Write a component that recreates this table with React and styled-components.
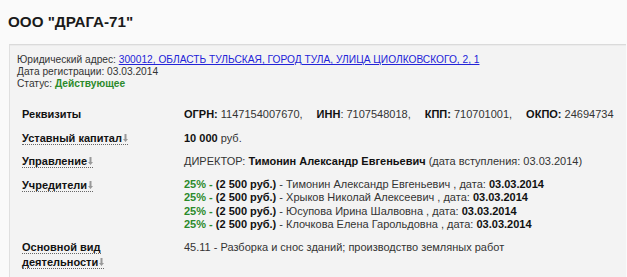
import React from "react";
import styled, { createGlobalStyle } from "styled-components";

const GlobalStyle = createGlobalStyle`
  body {
    margin: 0;
    background: #fafafa;
    font-family: "Liberation Sans", Arial, sans-serif;
    color: #333;
  }
`;

const Page = styled.div`
  width: 627px;
  height: 277px;
  overflow: hidden;
`;

const Title = styled.h1`
  margin: 0;
  padding: 12px 0 0 8px;
  height: 32px;
  box-sizing: border-box;
  font-size: 15.2px;
  line-height: 19px;
  font-weight: bold;
  color: #1a1a1a;
`;

const Panel = styled.div`
  margin: 12px 0 0 9px;
  width: 616px;
  min-height: 240px;
  background: #f3f3f3;
  border-top: 1px solid #dadada;
  border-left: 1px solid #e0e0e0;
  box-shadow: inset 0 1px 0 #ebebeb;
`;

const Info = styled.div`
  padding: 9px 7px 0;
  font-size: 10.2px;
  line-height: 12px;
  color: #333;
`;

const Link = styled.a`
  color: #2323d8;
  text-decoration: underline;
`;

const Status = styled.b`
  color: #2b8a2b;
`;

const Table = styled.div`
  display: grid;
  grid-template-columns: 162px 1fr;
  padding: 13px 0 0 12px;
  font-size: 11px;
`;

const Label = styled.div`
  padding: 4.25px 0;
  font-weight: bold;
  color: #111;
  line-height: 15px;
`;

const Hint = styled.span`
  border-bottom: 1px dotted #666;
`;

const Value = styled.div`
  padding: 4.25px 0;
  line-height: ${(p) => (p.$list ? "13.5px" : "15px")};
  color: #333;

  b {
    color: #111;
  }
`;

const Field = styled.span`
  margin-right: 14px;
`;

const Share = styled.span`
  color: #2b8a2b;
  font-weight: bold;
`;

const Arrow = () => (
  <svg width="5" height="8" viewBox="0 0 5 8" style={{ marginLeft: 1 }}>
    <path d="M1.5 0h2v5h1.5L2.5 8 0 5h1.5z" fill="#999" />
  </svg>
);

const founders = [
  "Тимонин Александр Евгеньевич",
  "Хрыков Николай Алексеевич",
  "Юсупова Ирина Шалвовна",
  "Клочкова Елена Гарольдовна",
];

export default function App() {
  return (
    <Page>
      <GlobalStyle />
      <Title>ООО "ДРАГА-71"</Title>
      <Panel>
        <Info>
          Юридический адрес:{" "}
          <Link href="#">
            300012, ОБЛАСТЬ ТУЛЬСКАЯ, ГОРОД ТУЛА, УЛИЦА ЦИОЛКОВСКОГО, 2, 1
          </Link>
          <br />
          Дата регистрации: 03.03.2014
          <br />
          Статус: <Status>Действующее</Status>
        </Info>
        <Table>
          <Label>Реквизиты</Label>
          <Value>
            <Field>
              <b>ОГРН:</b> 1147154007670,
            </Field>
            <Field>
              <b>ИНН</b>: 7107548018,
            </Field>
            <Field>
              <b>КПП:</b> 710701001,
            </Field>
            <b>ОКПО:</b> 24694734
          </Value>

          <Label>
            <Hint>
              Уставный капитал
              <Arrow />
            </Hint>
          </Label>
          <Value>
            <b>10 000</b> руб.
          </Value>

          <Label>
            <Hint>
              Управление
              <Arrow />
            </Hint>
          </Label>
          <Value>
            ДИРЕКТОР: <b>Тимонин Александр Евгеньевич</b> (дата вступления:
            03.03.2014)
          </Value>

          <Label>
            <Hint>
              Учредители
              <Arrow />
            </Hint>
          </Label>
          <Value $list>
            {founders.map((name) => (
              <div key={name}>
                <Share>25% -</Share> <b>(2 500 руб.)</b> - {name} , дата:{" "}
                <b>03.03.2014</b>
              </div>
            ))}
          </Value>

          <Label>
            <Hint>
              Основной вид
              <br />
              деятельности
              <Arrow />
            </Hint>
          </Label>
          <Value>45.11 - Разборка и снос зданий; производство земляных работ</Value>
        </Table>
      </Panel>
    </Page>
  );
}
